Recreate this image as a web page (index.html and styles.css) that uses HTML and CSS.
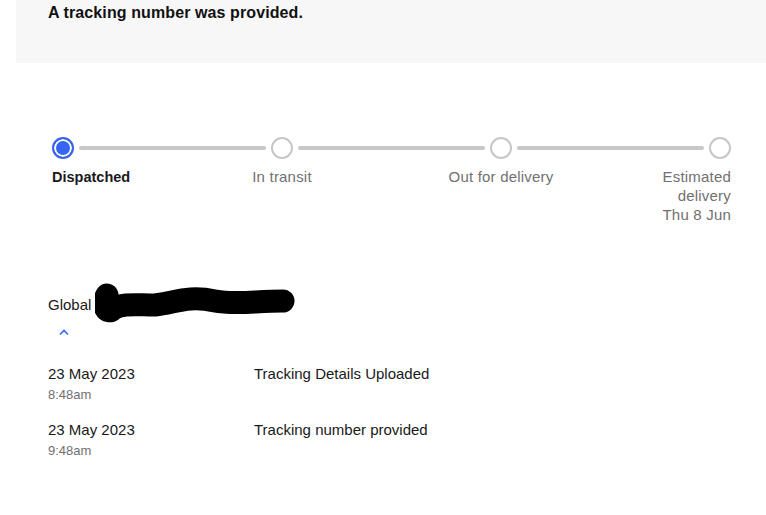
FILE: index.html
```html
<!DOCTYPE html>
<html lang="en">
<head>
<meta charset="utf-8">
<link rel="stylesheet" href="styles.css">
<title>Tracking</title>
</head>
<body>
<div class="banner">
  <h2 class="banner-title">A tracking number was provided.</h2>
</div>

<div class="stepper">
  <span class="dot dot-active"></span>
  <span class="line"></span>
  <span class="dot"></span>
  <span class="line"></span>
  <span class="dot"></span>
  <span class="line"></span>
  <span class="dot"></span>

  <span class="label label-first label-active">Dispatched</span>
  <span class="label label-mid col3">In transit</span>
  <span class="label label-mid col5">Out for delivery</span>
  <span class="label label-last">Estimated<br>delivery<br>Thu 8 Jun</span>
</div>

<div class="carrier">
  <div class="carrier-name">Global
    <svg class="scribble" width="210" height="40" viewBox="0 0 210 40"><path d="M12 12 C 6 22, 12 32, 18 26 C 28 20, 40 22, 60 22 C 80 20, 92 12, 120 18 C 140 22, 160 18, 188 18" fill="none" stroke="#000" stroke-width="23" stroke-linecap="round" stroke-linejoin="round"/></svg>
  </div>
  <svg class="chevron" width="10" height="7" viewBox="0 0 10 7"><path d="M1 5.5 L5 1.5 L9 5.5" fill="none" stroke="#3665f3" stroke-width="1.6"/></svg>
</div>

<div class="events">
  <div class="event">
    <div class="when">
      <div class="date">23 May 2023</div>
      <div class="time">8:48am</div>
    </div>
    <div class="what">Tracking Details Uploaded</div>
  </div>
  <div class="event">
    <div class="when">
      <div class="date">23 May 2023</div>
      <div class="time">9:48am</div>
    </div>
    <div class="what">Tracking number provided</div>
  </div>
</div>
</body>
</html>
```

FILE: styles.css
```css
html, body {
  margin: 0;
  padding: 0;
  background: #fff;
}
body {
  font-family: "Liberation Sans", Arial, sans-serif;
  color: #191919;
  font-size: 15px;
}
.banner {
  margin-left: 16px;
  background: #f7f7f7;
  height: 63px;
  padding-left: 32px;
  box-sizing: border-box;
}
.banner-title {
  margin: 0;
  padding-top: 2px;
  font-size: 16px;
  line-height: 22px;
  font-weight: 700;
  color: #111;
  letter-spacing: 0.1px;
}
.stepper {
  margin: 74px 0 0 52px;
  width: 679px;
  display: grid;
  grid-template-columns: 22px 1fr 22px 1fr 22px 1fr 22px;
  grid-template-rows: 22px auto;
  column-gap: 5px;
  row-gap: 8px;
  align-items: center;
}
.dot {
  width: 22px;
  height: 22px;
  box-sizing: border-box;
  border: 2px solid #c7c7c7;
  border-radius: 50%;
  background: #fff;
}
.dot-active {
  border-color: #3665f3;
  background: #3665f3;
  box-shadow: inset 0 0 0 2px #fff;
}
.line {
  height: 4px;
  background: #c7c7c7;
  border-radius: 2px;
}
.label {
  grid-row: 2;
  align-self: start;
  line-height: 19px;
  color: #707070;
  white-space: nowrap;
  width: max-content;
  letter-spacing: 0.2px;
}
.label-first {
  grid-column: 1;
  justify-self: start;
}
.label-active {
  color: #191919;
  font-weight: 700;
  font-size: 14.5px;
  letter-spacing: 0;
  padding-top: 1px;
}
.label-mid {
  justify-self: center;
}
.col3 { grid-column: 3; }
.col5 { grid-column: 5; }
.label-last {
  grid-column: 7;
  justify-self: end;
  text-align: right;
}
.carrier {
  margin: 71px 0 0 48px;
}
.carrier-name {
  position: relative;
  line-height: 20px;
  height: 20px;
}
.scribble {
  position: absolute;
  left: 47px;
  top: -12px;
}
.chevron {
  display: block;
  margin: 14px 0 0 11px;
}
.events {
  margin: 28px 0 0 48px;
}
.event {
  display: flex;
  margin-bottom: 16px;
}
.when {
  width: 206px;
}
.date {
  line-height: 20px;
}
.time {
  font-size: 13px;
  line-height: 20px;
  padding-top: 1px;
  margin-bottom: -1px;
  color: #707070;
}
.what {
  line-height: 20px;
}
```
